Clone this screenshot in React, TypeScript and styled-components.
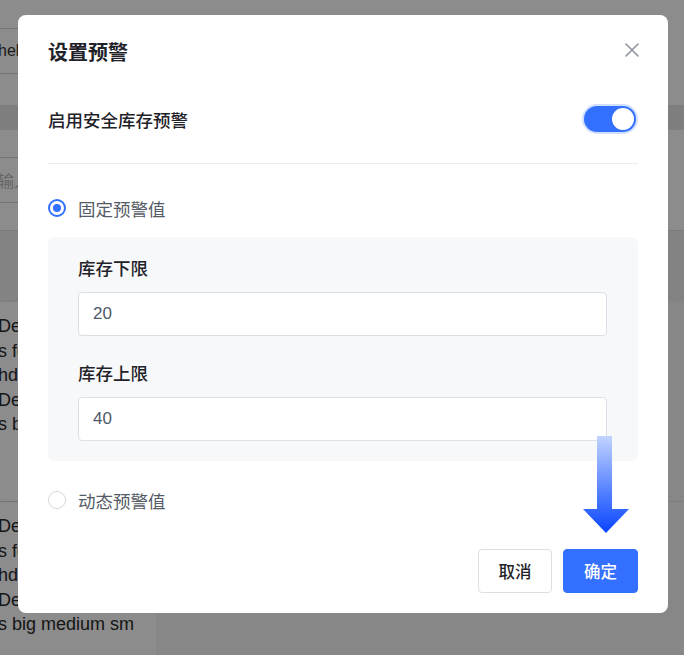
import React, { useState } from 'react';
import styled, { createGlobalStyle } from 'styled-components';

const GlobalStyle = createGlobalStyle`
  html, body {
    margin: 0;
    padding: 0;
    width: 684px;
    height: 655px;
    overflow: hidden;
    background: #fff;
    font-family: "Liberation Sans", "Noto Sans CJK SC", sans-serif;
  }
  * { box-sizing: border-box; }
`;

// ---- page behind the mask ----

const Page = styled.div`
  position: relative;
  width: 684px;
  height: 655px;
  background: #fff;
  overflow: hidden;
`;

const Spacer = styled.div<{ $h: number }>`
  height: ${(p) => p.$h}px;
`;

const FakeInput = styled.div<{ $muted?: boolean }>`
  height: 46px;
  margin-left: -30px;
  width: 260px;
  border-top: 1px solid #d4d4d4;
  border-bottom: 1px solid #d4d4d4;
  display: flex;
  align-items: center;
  padding-left: 28px;
  font-size: 16px;
  color: ${(p) => (p.$muted ? '#b8b8b8' : '#333')};
`;

const Band = styled.div`
  height: 25px;
  background: #e6e6e6;
`;

const TableHead = styled.div`
  height: 72px;
  background: #eeeeee;
  border-top: 1px solid #dcdcdc;
`;

const TableRow = styled.div`
  display: flex;
  height: 200px;
  border-bottom: 1px solid #e4e4e4;
`;

const LeftCell = styled.div`
  width: 158px;
  padding: 12px 0 0 0;
  margin-left: -2px;
  font-size: 18px;
  line-height: 24.5px;
  color: #2a2a2a;
  white-space: nowrap;
  overflow: hidden;
  box-shadow: 2px 0 3px rgba(0, 0, 0, 0.08);
`;

const RightCell = styled.div`
  flex: 1;
  background: #f6f6f6;
`;

// ---- mask & dialog ----

const Mask = styled.div`
  position: absolute;
  inset: 0;
  background: rgba(0, 0, 0, 0.45);
  padding: 15px 0 0 18px;
`;

const Dialog = styled.div`
  position: relative;
  width: 650px;
  background: #fff;
  border-radius: 8px;
  padding: 25px 30px 20px 30px;
`;

const Header = styled.div`
  display: flex;
  align-items: center;
  justify-content: space-between;
  height: 26px;
`;

const Title = styled.div`
  font-size: 20px;
  font-weight: 700;
  color: #1f2329;
  line-height: 26px;
`;

const CloseBtn = styled.button`
  border: none;
  background: none;
  padding: 0;
  width: 18px;
  height: 18px;
  margin: -6px -3px 0 0;
  display: flex;
  align-items: center;
  justify-content: center;
  cursor: pointer;
`;

const SwitchRow = styled.div`
  margin-top: 38px;
  height: 30px;
  display: flex;
  align-items: center;
  justify-content: space-between;
`;

const SwitchLabel = styled.div`
  font-size: 17.5px;
  font-weight: 500;
  color: #1f2329;
`;

const Switch = styled.button<{ $on: boolean }>`
  position: relative;
  width: 52px;
  height: 26px;
  margin-right: 2px;
  border: none;
  border-radius: 13px;
  padding: 0;
  background: ${(p) => (p.$on ? '#3370ff' : '#c9cdd4')};
  box-shadow: 0 0 0 2px rgba(51, 112, 255, 0.22);
  cursor: pointer;

  &::after {
    content: '';
    position: absolute;
    top: 2px;
    left: ${(p) => (p.$on ? '28px' : '2px')};
    width: 22px;
    height: 22px;
    border-radius: 50%;
    background: #fff;
  }
`;

const Divider = styled.div`
  margin-top: 29px;
  height: 1px;
  background: #ebedf0;
`;

const RadioRow = styled.label<{ $top: number }>`
  margin-top: ${(p) => p.$top}px;
  height: 24px;
  display: flex;
  align-items: center;
  gap: 12px;
  font-size: 17.5px;
  color: #555b66;
  cursor: pointer;
`;

const RadioDot = styled.span<{ $checked: boolean }>`
  width: 18px;
  height: 18px;
  border-radius: 50%;
  border: ${(p) => (p.$checked ? '2px solid #3370ff' : '1.5px solid #d5d8de')};
  display: flex;
  align-items: center;
  justify-content: center;
  background: #fff;

  &::after {
    content: '';
    width: 8px;
    height: 8px;
    border-radius: 50%;
    background: ${(p) => (p.$checked ? '#3370ff' : 'transparent')};
  }
`;

const Panel = styled.div`
  margin-top: 17px;
  background: #f7f8fa;
  border-radius: 6px;
  padding: 22px 31px 20px 30px;
`;

const FieldLabel = styled.div<{ $top?: number }>`
  margin-top: ${(p) => p.$top ?? 0}px;
  font-size: 17.5px;
  font-weight: 500;
  line-height: 20px;
  color: #1f2329;
`;

const NumberInput = styled.input`
  display: block;
  margin-top: 13px;
  width: 100%;
  height: 44px;
  border: 1px solid #dcdfe6;
  border-radius: 4px;
  background: #fff;
  padding: 0 14px;
  font-family: "Liberation Sans", "Noto Sans CJK SC", sans-serif;
  font-size: 17px;
  color: #4e5969;
  outline: none;
`;

const Footer = styled.div`
  margin-top: 37px;
  display: flex;
  justify-content: flex-end;
  gap: 11px;
`;

const Button = styled.button<{ $primary?: boolean }>`
  height: 44px;
  width: ${(p) => (p.$primary ? '75px' : '74px')};
  border-radius: 4px;
  border: 1px solid ${(p) => (p.$primary ? '#3370ff' : '#dcdfe6')};
  background: ${(p) => (p.$primary ? '#3370ff' : '#fff')};
  color: ${(p) => (p.$primary ? '#fff' : '#1f2329')};
  font-family: "Liberation Sans", "Noto Sans CJK SC", sans-serif;
  font-size: 16.5px;
  font-weight: 500;
  cursor: pointer;
`;

const Arrow = styled.svg`
  position: absolute;
  left: 565px;
  top: 421px;
  pointer-events: none;
`;

const CloseIcon = () => (
  <svg width="16" height="16" viewBox="0 0 16 16">
    <path d="M2 2 L14 14 M14 2 L2 14" stroke="#8f959e" strokeWidth="1.6" strokeLinecap="round" />
  </svg>
);

const bgLines = ['Des', 's fo', 'hdp', 'Dec', 's big medium sm'];

export default function App() {
  const [enabled, setEnabled] = useState(true);
  const [mode, setMode] = useState<'fixed' | 'dynamic'>('fixed');
  const [low, setLow] = useState('20');
  const [high, setHigh] = useState('40');

  return (
    <>
      <GlobalStyle />
      <Page>
        <Spacer $h={28} />
        <FakeInput>hehe</FakeInput>
        <Spacer $h={31} />
        <Band />
        <Spacer $h={27} />
        <FakeInput $muted>输入</FakeInput>
        <Spacer $h={27} />
        <TableHead />
        <TableRow>
          <LeftCell>
            {bgLines.map((l, i) => (
              <div key={`a-${i}`}>{l}</div>
            ))}
          </LeftCell>
          <RightCell />
        </TableRow>
        <TableRow>
          <LeftCell>
            {bgLines.map((l, i) => (
              <div key={`b-${i}`}>{l}</div>
            ))}
          </LeftCell>
          <RightCell />
        </TableRow>

        <Mask>
          <Dialog>
            <Header>
              <Title>设置预警</Title>
              <CloseBtn aria-label="关闭">
                <CloseIcon />
              </CloseBtn>
            </Header>

            <SwitchRow>
              <SwitchLabel>启用安全库存预警</SwitchLabel>
              <Switch $on={enabled} onClick={() => setEnabled(!enabled)} aria-label="启用" />
            </SwitchRow>

            <Divider />

            <RadioRow $top={32} onClick={() => setMode('fixed')}>
              <RadioDot $checked={mode === 'fixed'} />
              固定预警值
            </RadioRow>

            <Panel>
              <FieldLabel>库存下限</FieldLabel>
              <NumberInput value={low} onChange={(e) => setLow(e.target.value)} />
              <FieldLabel $top={28}>库存上限</FieldLabel>
              <NumberInput value={high} onChange={(e) => setHigh(e.target.value)} />
            </Panel>

            <RadioRow $top={27} onClick={() => setMode('dynamic')}>
              <RadioDot $checked={mode === 'dynamic'} />
              动态预警值
            </RadioRow>

            <Footer>
              <Button>取消</Button>
              <Button $primary>确定</Button>
            </Footer>

            <Arrow width="48" height="100" viewBox="0 0 48 100">
              <defs>
                <linearGradient id="arrowGrad" x1="0" y1="0" x2="0" y2="1">
                  <stop offset="0" stopColor="#c3d3ff" />
                  <stop offset="0.6" stopColor="#4f7dff" />
                  <stop offset="1" stopColor="#0a45ff" />
                </linearGradient>
              </defs>
              <path
                d="M14 0 H29 V73 H46 L23 97 L0 73 H14 Z"
                fill="url(#arrowGrad)"
              />
            </Arrow>
          </Dialog>
        </Mask>
      </Page>
    </>
  );
}
